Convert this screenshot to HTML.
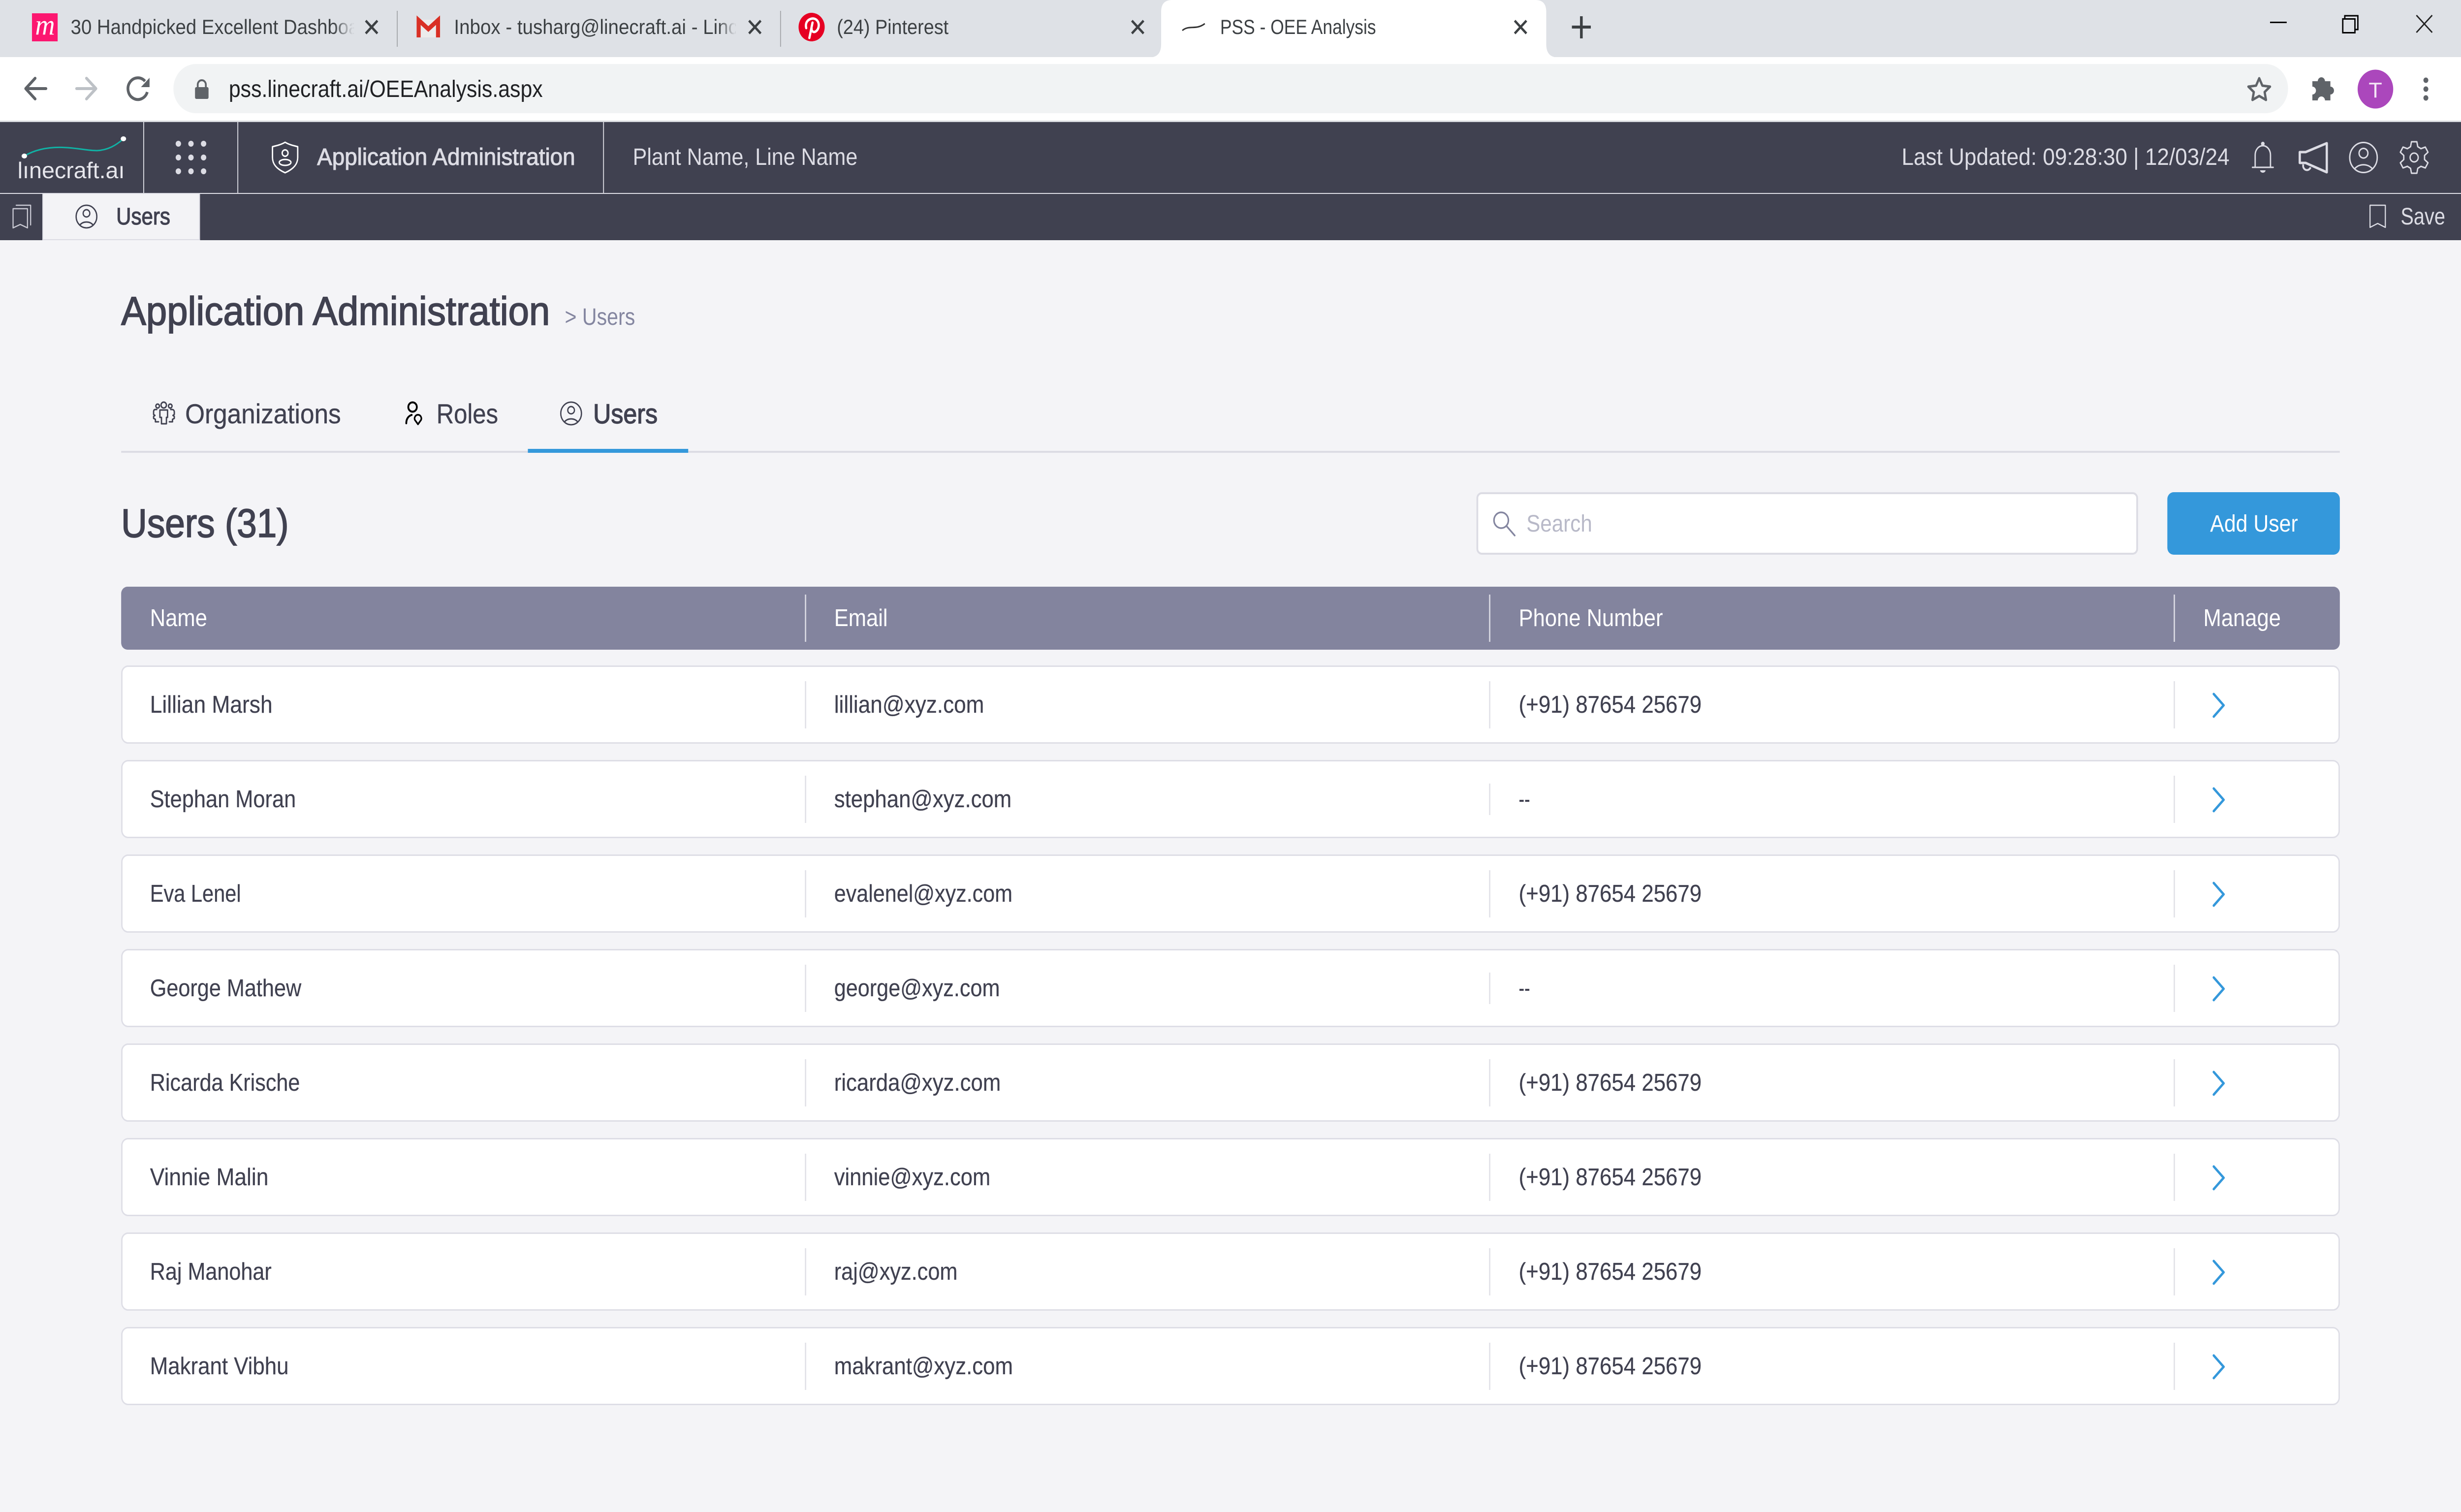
<!DOCTYPE html>
<html lang="en">
<head>
<meta charset="utf-8">
<title>PSS - OEE Analysis</title>
<style>
html,body{margin:0;padding:0;background:#f4f4f7;width:100%;height:100%;overflow:hidden}
svg{display:block;position:fixed;left:0;top:0;width:100vw;height:100vh}
text{font-family:"Liberation Sans",sans-serif;white-space:pre}
.tab{font-size:42px;fill:#3c4043}
.h{font-size:48px;fill:#dcdce4}
.hm{font-size:48px;fill:#dcdce4;stroke:#dcdce4;stroke-width:1.1}
.d{font-size:49px;fill:#404150;stroke:#404150;stroke-width:.25}
.th{font-size:49px;fill:#fff}
.ln{fill:none;stroke:#dcdce4;stroke-width:3;stroke-linecap:round;stroke-linejoin:round}
.dk{fill:none;stroke:#404150;stroke-width:3;stroke-linecap:round;stroke-linejoin:round}
.x{fill:none;stroke:#3c4043;stroke-width:5}
.chev{fill:none;stroke:#3498db;stroke-width:5;stroke-linecap:round;stroke-linejoin:round}
.row{fill:#fff;stroke:#dedee6;stroke-width:3}
.rd{fill:#e2e2e8}
.wd{fill:#d8d8e2}
</style>
</head>
<body>
<svg viewBox="0 0 5464 3072" preserveAspectRatio="none" xmlns="http://www.w3.org/2000/svg">
<defs>
<linearGradient id="fade" x1="0" x2="1" y1="0" y2="0"><stop offset="0" stop-color="#dee1e6" stop-opacity="0"/><stop offset="1" stop-color="#dee1e6"/></linearGradient>
<g id="person">
<circle cx="0" cy="0" r="28"/>
<circle cx="0" cy="-8" r="9"/>
<path d="M-18 21C-9 11 9 11 18 21"/>
</g>
</defs>

<rect width="5464" height="3072" fill="#f4f4f7"/>

<!-- Browser tab strip -->
<rect width="5464" height="116" fill="#dee1e6"/>
<rect x="71" y="27" width="57" height="57" fill="#fc1770"/>
<text x="78" y="70" font-size="58" textLength="44" lengthAdjust="spacingAndGlyphs" style="font-family:'Liberation Serif',serif;font-style:italic" fill="#fff">m</text>
<text class="tab" x="157" y="69" textLength="640" lengthAdjust="spacingAndGlyphs">30 Handpicked Excellent Dashboa</text>
<rect x="740" y="25" width="45" height="60" fill="url(#fade)"/>
<rect x="785" y="25" width="20" height="60" fill="#dee1e6"/>
<path class="x" d="M812 42L838 68M838 42L812 68"/>
<rect x="881" y="22" width="2" height="73" fill="#a4a6aa"/>

<path d="M929 40H973V76H929Z" fill="#ececec"/>
<path d="M929.5 76V41L951 59L972.5 41V76" fill="none" stroke="#d93025" stroke-width="9"/>
<text class="tab" x="1008" y="69" textLength="630" lengthAdjust="spacingAndGlyphs">Inbox - tusharg@linecraft.ai - Linc</text>
<rect x="1595" y="25" width="38" height="60" fill="url(#fade)"/>
<rect x="1633" y="25" width="15" height="60" fill="#dee1e6"/>
<path class="x" d="M1663 42L1689 68M1689 42L1663 68"/>
<rect x="1732" y="22" width="2" height="73" fill="#a4a6aa"/>

<circle cx="1802" cy="55" r="29" fill="#e60023"/>
<path d="M1797 77L1804 46M1790 57C1786 42 1800 36 1808 38C1820 41 1821 58 1811 64C1805 67 1801 62 1802 58" fill="none" stroke="#fff" stroke-width="5" stroke-linecap="round"/>
<text class="tab" x="1858" y="69" textLength="248" lengthAdjust="spacingAndGlyphs">(24) Pinterest</text>
<path class="x" d="M2513 42L2539 68M2539 42L2513 68"/>

<path d="M2560 116Q2578 112 2578 90V24Q2578 0 2602 0H3409Q3433 0 3433 24V90Q3433 112 3451 116Z" fill="#fff"/>
<path d="M2625 62C2640 50 2655 62 2675 48" fill="none" stroke="#333" stroke-width="3"/>
<text x="2709" y="69" font-size="42" fill="#3c4043" textLength="346" lengthAdjust="spacingAndGlyphs">PSS - OEE Analysis</text>
<path class="x" d="M3363 42L3389 68M3389 42L3363 68"/>
<path d="M3511 33V78M3490 55H3532" fill="none" stroke="#3c4043" stroke-width="6"/>

<!-- window controls -->
<rect x="5040" y="44" width="37" height="3" fill="#000"/>
<rect x="5201.5" y="38.5" width="27" height="28" fill="none" stroke="#000" stroke-width="3"/>
<path d="M5206 37V32H5235V60H5229" fill="none" stroke="#000" stroke-width="3"/>
<path d="M5365 31L5400 66M5400 31L5365 66" fill="none" stroke="#222" stroke-width="3"/>

<!-- Toolbar -->
<rect y="116" width="5464" height="129" fill="#fff"/>
<rect y="245" width="5464" height="3" fill="#dadce0"/>
<path d="M102 180H59M78 159L57 180L78 201" fill="none" stroke="#5f6368" stroke-width="6" stroke-linecap="round" stroke-linejoin="round"/>
<path d="M170 180H213M192 159L213 180L192 201" fill="none" stroke="#bdc1c6" stroke-width="6" stroke-linecap="round" stroke-linejoin="round"/>
<path d="M322 165A22 22 0 1 0 327 187" fill="none" stroke="#5f6368" stroke-width="6"/>
<path d="M332 158V177H313Z" fill="#5f6368"/>
<rect x="385" y="130" width="4695" height="100" rx="50" fill="#f1f3f4"/>
<rect x="433" y="177" width="30" height="24" rx="3" fill="#5f6368"/>
<path d="M439 178V172A9 9 0 0 1 457 172V178" fill="none" stroke="#5f6368" stroke-width="4"/>
<text x="508" y="197" font-size="48" fill="#202124" textLength="697" lengthAdjust="spacingAndGlyphs">pss.linecraft.ai/OEEAnalysis.aspx</text>
<path d="M5016 159L5023 174L5040 176L5028 187L5031 203L5016 195L5001 203L5004 187L4992 176L5009 174Z" fill="none" stroke="#5f6368" stroke-width="5" stroke-linejoin="round"/>
<path d="M5134 165H5146A8 8 0 0 1 5162 165H5174V176A8 8 0 0 1 5174 192V204H5162A8 8 0 0 0 5146 204H5134V192A8 8 0 0 0 5134 176Z" fill="#5f6368"/>
<circle cx="5274" cy="181" r="39.5" fill="#ab47bc"/>
<text x="5259" y="198" font-size="44" fill="#f3e5f5" textLength="30" lengthAdjust="spacingAndGlyphs">T</text>
<circle cx="5386" cy="163" r="5.5" fill="#5f6368"/><circle cx="5386" cy="181" r="5.5" fill="#5f6368"/><circle cx="5386" cy="199" r="5.5" fill="#5f6368"/>

<!-- App header -->
<rect y="248" width="5464" height="144" fill="#404150"/>
<rect y="392" width="5464" height="2" fill="#dcdce4"/>
<rect y="394" width="5464" height="94" fill="#404150"/>
<rect x="318" y="248" width="2" height="144" fill="#dcdce4"/>
<rect x="527" y="248" width="2" height="144" fill="#dcdce4"/>
<rect x="1339" y="248" width="2" height="144" fill="#dcdce4"/>

<path d="M54 317C85 300 120 298 150 300C180 302 195 306 215 306C240 305 258 295 274 282" fill="none" stroke="#10b2a5" stroke-width="3"/>
<ellipse cx="54" cy="317" rx="6" ry="5" fill="#fff"/><ellipse cx="274" cy="282" rx="6" ry="5" fill="#fff"/>
<text x="39" y="362" font-size="46" fill="#e6e6ec" textLength="238" lengthAdjust="spacingAndGlyphs">lınecraft.aı</text>

<g fill="#dcdce4">
<circle cx="396" cy="292" r="6"/><circle cx="424" cy="292" r="6"/><circle cx="452" cy="292" r="6"/>
<circle cx="396" cy="320" r="6"/><circle cx="424" cy="320" r="6"/><circle cx="452" cy="320" r="6"/>
<circle cx="396" cy="348" r="6"/><circle cx="424" cy="348" r="6"/><circle cx="452" cy="348" r="6"/>
</g>

<g fill="none" stroke="#fff" stroke-width="3" stroke-linejoin="round">
<path d="M633 289C642 294 652 296 661 298V320C661 336 648 345 633 351C618 345 605 336 605 320V298C614 296 624 294 633 289Z"/>
<circle cx="633" cy="311" r="6.5"/>
<ellipse cx="633" cy="330" rx="13" ry="6"/>
</g>
<text class="hm" x="704" y="335" textLength="573" lengthAdjust="spacingAndGlyphs">Application Administration</text>
<text class="h" x="1405" y="335" textLength="499" lengthAdjust="spacingAndGlyphs">Plant Name, Line Name</text>
<text class="h" x="4222" y="335" textLength="728" lengthAdjust="spacingAndGlyphs">Last Updated: 09:28:30 | 12/03/24</text>

<!-- bell -->
<path class="ln" d="M5007 340V315C5007 304 5015 296 5024 296C5033 296 5041 304 5041 315V340M5001 340H5047"/>
<circle cx="5024" cy="292" r="4" fill="#dcdce4"/>
<path d="M5018 346H5030A6 5 0 0 1 5018 346Z" fill="#dcdce4"/>
<!-- megaphone -->
<path d="M5106 309H5119L5166 291V350L5119 331H5106Z" fill="none" stroke="#dcdce4" stroke-width="5" stroke-linejoin="round"/>
<path d="M5114 334A8 8 0 0 0 5130 340" fill="none" stroke="#dcdce4" stroke-width="4"/>
<!-- person -->
<g class="ln" style="stroke-width:2.8" transform="translate(5247.5 320) scale(1.09)"><use href="#person"/></g>
<!-- gear -->
<g class="ln" transform="translate(5360 320)">
<path d="M-6-32H6L8-22L15.05-17.93L24.7-21.2L30.7-10.8L23.05-4.07V4.07L30.7 10.8L24.7 21.2L15.05 17.93L8 22L6 32H-6L-8 22L-15.05 17.93L-24.7 21.2L-30.7 10.8L-23.05 4.07V-4.07L-30.7-10.8L-24.7-21.2L-15.05-17.93L-8-22Z"/>
<circle r="9"/>
</g>

<!-- sub bar -->
<path class="ln" style="stroke:#c9c9d3;stroke-width:2.5" d="M29 424H61V463L45 456L29 463Z"/>
<path class="ln" style="stroke:#c9c9d3;stroke-width:2.5" d="M36 417H68V457"/>
<rect x="94" y="394" width="350" height="94" fill="#f3f3f6"/>
<rect x="94" y="394" width="2" height="94" fill="#dcdce4"/>
<rect x="442" y="394" width="2" height="94" fill="#dcdce4"/>
<rect x="94" y="486" width="350" height="2" fill="#dcdce4"/>
<g class="dk" transform="translate(192 440) scale(.82)"><use href="#person" style="stroke-width:3.4"/></g>
<text x="258" y="456" font-size="48" fill="#404150" stroke="#404150" stroke-width="1.2" textLength="120" lengthAdjust="spacingAndGlyphs">Users</text>
<path class="ln" style="stroke-width:2.5" d="M5262 417H5296V462L5279 454L5262 462Z"/>
<text class="h" x="5330" y="456" textLength="99" lengthAdjust="spacingAndGlyphs">Save</text>

<!-- Title -->
<text x="269" y="660" font-size="82" fill="#404150" stroke="#404150" stroke-width="1.8" textLength="952" lengthAdjust="spacingAndGlyphs">Application Administration</text>
<text x="1254" y="660" font-size="48" fill="#8486a0" textLength="156" lengthAdjust="spacingAndGlyphs">&gt; Users</text>

<!-- Section tabs -->
<rect x="269" y="916" width="4926" height="4" fill="#dcdce4"/>
<rect x="1172" y="912" width="356" height="8" fill="#3498db"/>
<g class="dk">
<circle cx="363.5" cy="823" r="6"/><circle cx="350" cy="825" r="4"/><circle cx="378" cy="825" r="4"/>
<path d="M355 833H372V848H369.5V861H358.5V848H355Z"/>
<path d="M348 832H345C342 832 341 834 341 837V842L344 844L341 846V850L345 852V857H352M379 832H382C385 832 387 834 387 837V842L384 844L387 846V850L383 852V857H376"/>
</g>
<text x="411" y="860" font-size="56" fill="#404150" stroke="#404150" stroke-width=".4" textLength="346" lengthAdjust="spacingAndGlyphs">Organizations</text>
<g fill="none" stroke="#000" stroke-width="4" stroke-linecap="round">
<circle cx="916" cy="827" r="9.5"/>
<path d="M902 860C902 851 907 845 914 843"/>
<path d="M928 862L921 853A7.5 7.5 0 1 1 935 853Z" stroke-width="3.5" stroke-linejoin="round"/>
</g>
<text x="969" y="860" font-size="56" fill="#404150" stroke="#404150" stroke-width=".4" textLength="137" lengthAdjust="spacingAndGlyphs">Roles</text>
<g class="dk" transform="translate(1268 840) scale(.82)"><use href="#person" style="stroke-width:3.4"/></g>
<text x="1317" y="860" font-size="56" fill="#404150" stroke="#404150" stroke-width="1.4" textLength="143" lengthAdjust="spacingAndGlyphs">Users</text>

<!-- Users heading -->
<text x="269" y="1091" font-size="82" fill="#404150" stroke="#404150" stroke-width="1.8" textLength="372" lengthAdjust="spacingAndGlyphs">Users (31)</text>

<!-- Search + button -->
<rect x="3280" y="1002" width="1465" height="123" rx="10" fill="#fff" stroke="#dcdce4" stroke-width="4"/>
<circle cx="3333" cy="1057" r="16" fill="none" stroke="#8486a0" stroke-width="3.5"/>
<path d="M3345 1069L3363 1088" stroke="#8486a0" stroke-width="3.5" stroke-linecap="round"/>
<text x="3389" y="1080" font-size="48" fill="#b8b9c8" textLength="146" lengthAdjust="spacingAndGlyphs">Search</text>
<rect x="4812" y="1000" width="383" height="127" rx="14" fill="#3498db"/>
<text x="4907" y="1080" font-size="48" fill="#fff" textLength="195" lengthAdjust="spacingAndGlyphs">Add User</text>

<!-- Table header -->
<rect x="269" y="1192" width="4926" height="128" rx="14" fill="#83849e"/>
<rect class="wd" x="1787" y="1208" width="3" height="96"/>
<rect class="wd" x="3306" y="1208" width="3" height="96"/>
<rect class="wd" x="4826" y="1208" width="3" height="96"/>
<text class="th" x="333" y="1272" textLength="127" lengthAdjust="spacingAndGlyphs">Name</text>
<text class="th" x="1852" y="1272" textLength="119" lengthAdjust="spacingAndGlyphs">Email</text>
<text class="th" x="3372" y="1272" textLength="320" lengthAdjust="spacingAndGlyphs">Phone Number</text>
<text class="th" x="4892" y="1272" textLength="172" lengthAdjust="spacingAndGlyphs">Manage</text>

<!-- Row 1 -->
<rect class="row" x="270.5" y="1353.5" width="4923" height="156" rx="14"/>
<rect class="rd" x="1787" y="1384" width="3" height="96"/><rect class="rd" x="3306" y="1384" width="3" height="96"/><rect class="rd" x="4826" y="1384" width="3" height="96"/>
<text class="d" x="333" y="1448" textLength="272" lengthAdjust="spacingAndGlyphs">Lillian Marsh</text>
<text class="d" x="1852" y="1448" textLength="333" lengthAdjust="spacingAndGlyphs">lillian@xyz.com</text>
<text class="d" x="3372" y="1448" textLength="406" lengthAdjust="spacingAndGlyphs">(+91) 87654 25679</text>
<path class="chev" d="M4915 1410L4937 1433L4915 1456"/>

<!-- Row 2 -->
<rect class="row" x="270.5" y="1545.5" width="4923" height="156" rx="14"/>
<rect class="rd" x="1787" y="1576" width="3" height="96"/><rect class="rd" x="3306" y="1592" width="3" height="64"/><rect class="rd" x="4826" y="1576" width="3" height="96"/>
<text class="d" x="333" y="1640" textLength="324" lengthAdjust="spacingAndGlyphs">Stephan Moran</text>
<text class="d" x="1852" y="1640" textLength="394" lengthAdjust="spacingAndGlyphs">stephan@xyz.com</text>
<text class="d" x="3372" y="1640" textLength="25" lengthAdjust="spacingAndGlyphs">--</text>
<path class="chev" d="M4915 1602L4937 1625L4915 1648"/>

<!-- Row 3 -->
<rect class="row" x="270.5" y="1737.5" width="4923" height="156" rx="14"/>
<rect class="rd" x="1787" y="1768" width="3" height="96"/><rect class="rd" x="3306" y="1768" width="3" height="96"/><rect class="rd" x="4826" y="1768" width="3" height="96"/>
<text class="d" x="333" y="1832" textLength="202" lengthAdjust="spacingAndGlyphs">Eva Lenel</text>
<text class="d" x="1852" y="1832" textLength="396" lengthAdjust="spacingAndGlyphs">evalenel@xyz.com</text>
<text class="d" x="3372" y="1832" textLength="406" lengthAdjust="spacingAndGlyphs">(+91) 87654 25679</text>
<path class="chev" d="M4915 1794L4937 1817L4915 1840"/>

<!-- Row 4 -->
<rect class="row" x="270.5" y="1929.5" width="4923" height="156" rx="14"/>
<rect class="rd" x="1787" y="1960" width="3" height="96"/><rect class="rd" x="3306" y="1976" width="3" height="64"/><rect class="rd" x="4826" y="1960" width="3" height="96"/>
<text class="d" x="333" y="2024" textLength="336" lengthAdjust="spacingAndGlyphs">George Mathew</text>
<text class="d" x="1852" y="2024" textLength="368" lengthAdjust="spacingAndGlyphs">george@xyz.com</text>
<text class="d" x="3372" y="2024" textLength="25" lengthAdjust="spacingAndGlyphs">--</text>
<path class="chev" d="M4915 1986L4937 2009L4915 2032"/>

<!-- Row 5 -->
<rect class="row" x="270.5" y="2121.5" width="4923" height="156" rx="14"/>
<rect class="rd" x="1787" y="2152" width="3" height="96"/><rect class="rd" x="3306" y="2152" width="3" height="96"/><rect class="rd" x="4826" y="2152" width="3" height="96"/>
<text class="d" x="333" y="2216" textLength="333" lengthAdjust="spacingAndGlyphs">Ricarda Krische</text>
<text class="d" x="1852" y="2216" textLength="370" lengthAdjust="spacingAndGlyphs">ricarda@xyz.com</text>
<text class="d" x="3372" y="2216" textLength="406" lengthAdjust="spacingAndGlyphs">(+91) 87654 25679</text>
<path class="chev" d="M4915 2178L4937 2201L4915 2224"/>

<!-- Row 6 -->
<rect class="row" x="270.5" y="2313.5" width="4923" height="156" rx="14"/>
<rect class="rd" x="1787" y="2344" width="3" height="96"/><rect class="rd" x="3306" y="2344" width="3" height="96"/><rect class="rd" x="4826" y="2344" width="3" height="96"/>
<text class="d" x="333" y="2408" textLength="263" lengthAdjust="spacingAndGlyphs">Vinnie Malin</text>
<text class="d" x="1852" y="2408" textLength="347" lengthAdjust="spacingAndGlyphs">vinnie@xyz.com</text>
<text class="d" x="3372" y="2408" textLength="406" lengthAdjust="spacingAndGlyphs">(+91) 87654 25679</text>
<path class="chev" d="M4915 2370L4937 2393L4915 2416"/>

<!-- Row 7 -->
<rect class="row" x="270.5" y="2505.5" width="4923" height="156" rx="14"/>
<rect class="rd" x="1787" y="2536" width="3" height="96"/><rect class="rd" x="3306" y="2536" width="3" height="96"/><rect class="rd" x="4826" y="2536" width="3" height="96"/>
<text class="d" x="333" y="2600" textLength="270" lengthAdjust="spacingAndGlyphs">Raj Manohar</text>
<text class="d" x="1852" y="2600" textLength="274" lengthAdjust="spacingAndGlyphs">raj@xyz.com</text>
<text class="d" x="3372" y="2600" textLength="406" lengthAdjust="spacingAndGlyphs">(+91) 87654 25679</text>
<path class="chev" d="M4915 2562L4937 2585L4915 2608"/>

<!-- Row 8 -->
<rect class="row" x="270.5" y="2697.5" width="4923" height="156" rx="14"/>
<rect class="rd" x="1787" y="2728" width="3" height="96"/><rect class="rd" x="3306" y="2728" width="3" height="96"/><rect class="rd" x="4826" y="2728" width="3" height="96"/>
<text class="d" x="333" y="2792" textLength="308" lengthAdjust="spacingAndGlyphs">Makrant Vibhu</text>
<text class="d" x="1852" y="2792" textLength="397" lengthAdjust="spacingAndGlyphs">makrant@xyz.com</text>
<text class="d" x="3372" y="2792" textLength="406" lengthAdjust="spacingAndGlyphs">(+91) 87654 25679</text>
<path class="chev" d="M4915 2754L4937 2777L4915 2800"/>
</svg>
</body>
</html>
